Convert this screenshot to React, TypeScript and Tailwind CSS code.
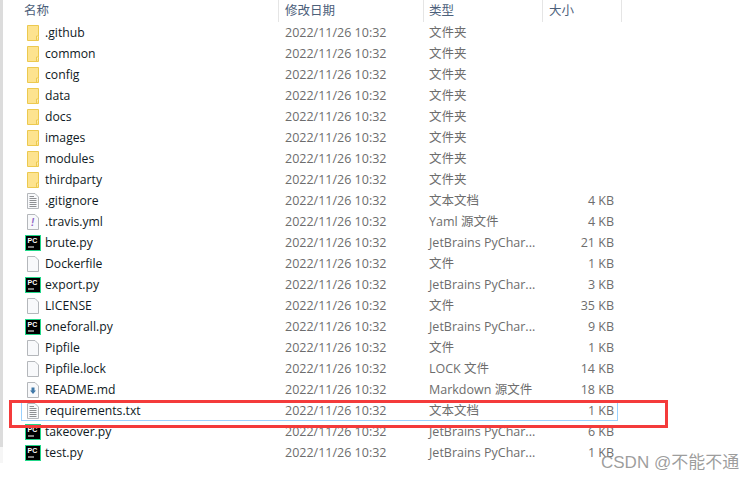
type Kind = "folder" | "doc" | "yaml" | "pc" | "blank" | "md"

interface Row {
  name: string
  kind: Kind
  type: string
  size?: string
  selected?: boolean
}

const rows: Row[] = [
  { name: ".github", kind: "folder", type: "文件夹" },
  { name: "common", kind: "folder", type: "文件夹" },
  { name: "config", kind: "folder", type: "文件夹" },
  { name: "data", kind: "folder", type: "文件夹" },
  { name: "docs", kind: "folder", type: "文件夹" },
  { name: "images", kind: "folder", type: "文件夹" },
  { name: "modules", kind: "folder", type: "文件夹" },
  { name: "thirdparty", kind: "folder", type: "文件夹" },
  { name: ".gitignore", kind: "doc", type: "文本文档", size: "4 KB" },
  { name: ".travis.yml", kind: "yaml", type: "Yaml 源文件", size: "4 KB" },
  { name: "brute.py", kind: "pc", type: "JetBrains PyChar...", size: "21 KB" },
  { name: "Dockerfile", kind: "blank", type: "文件", size: "1 KB" },
  { name: "export.py", kind: "pc", type: "JetBrains PyChar...", size: "3 KB" },
  { name: "LICENSE", kind: "blank", type: "文件", size: "35 KB" },
  { name: "oneforall.py", kind: "pc", type: "JetBrains PyChar...", size: "9 KB" },
  { name: "Pipfile", kind: "blank", type: "文件", size: "1 KB" },
  { name: "Pipfile.lock", kind: "blank", type: "LOCK 文件", size: "14 KB" },
  { name: "README.md", kind: "md", type: "Markdown 源文件", size: "18 KB" },
  { name: "requirements.txt", kind: "doc", type: "文本文档", size: "1 KB", selected: true },
  { name: "takeover.py", kind: "pc", type: "JetBrains PyChar...", size: "6 KB" },
  { name: "test.py", kind: "pc", type: "JetBrains PyChar...", size: "1 KB" },
]

function FileIcon({ kind }: { kind: Kind }) {
  if (kind === "pc") {
    return (
      <svg width="16" height="16" viewBox="0 0 16 16">
        <rect x="0.5" y="0.5" width="15" height="15" fill="#000" stroke="#21d789" />
        <text x="2.5" y="8" fontSize="7" fontWeight="700" fill="#fff" fontFamily="Liberation Sans, sans-serif">PC</text>
        <rect x="3" y="11.5" width="6" height="1" fill="#fff" />
      </svg>
    )
  }
  if (kind === "folder") {
    return (
      <svg width="16" height="16" viewBox="0 0 16 16">
        <path d="M2.5 .5H13.5V15.5H2.5Z" fill="#fde38f" stroke="#ecc94f" />
        <path d="M11.5 15V11H13.5" fill="#fff3c4" stroke="#ecc94f" />
      </svg>
    )
  }
  return (
    <svg width="16" height="16" viewBox="0 0 16 16">
      <path d="M2.5 .5H10L13.5 4V15.5H2.5Z" fill="#f8f9fb" stroke="#b4b7bb" />
      {kind === "doc" && (
        <path d="M4.5 3.5H9M4.5 5.5H11.5M4.5 7.5H11.5M4.5 9.5H11.5M4.5 11.5H11.5M4.5 13.5H11.5" stroke="#8d8f92" fill="none" />
      )}
      {kind === "yaml" && (
        <text x="6" y="11.5" fontSize="10" fontWeight="700" fontStyle="italic" fill="#8e63c4" fontFamily="Liberation Sans, sans-serif">!</text>
      )}
      {kind === "md" && <path d="M6.5 5.5H9.5V8.5H11L8 12L5 8.5H6.5Z" fill="#3f78a8" />}
    </svg>
  )
}

export default function App() {
  return (
    <div className="relative w-[752px] h-[480px] overflow-hidden bg-white text-[12.5px] text-[#0f1a24] font-['Open_Sans','Noto_Sans_CJK_SC',sans-serif]">
      <div className="flex h-full">
        <div className="w-[3px] h-[463px] shrink-0 bg-[#f6f6f6]">
          <div className="h-[447px] bg-[#dcdcdc]" />
        </div>
        <div className="flex-1 min-w-0">
          {/* header */}
          <div className="flex h-[22px] text-[#4c607a] items-center">
            <div className="w-[275px] pl-[21px]">名称</div>
            <div className="w-[145px] h-full flex items-center pl-[6px] border-l border-[#e5e5e5]">修改日期</div>
            <div className="w-[119px] h-full flex items-center pl-[5px] border-l border-[#e5e5e5]">类型</div>
            <div className="w-[80px] h-full flex items-center pl-[6px] border-x border-[#e5e5e5]">大小</div>
          </div>
          {/* rows */}
          {rows.map((row) => (
            <div key={row.name} className={`flex h-[21px] items-center ml-[18px] w-[597px] border ${row.selected ? "border-[#99d1ff]" : "border-transparent"}`}>
              <div className="w-[3px] shrink-0" />
              <div className="w-[253px] shrink-0 flex items-center gap-[4px] whitespace-nowrap">
                <FileIcon kind={row.kind} />
                <span className="text-[12.2px] pt-[2px]">{row.name}</span>
              </div>
              <div className="w-[144px] pl-[7px] pt-[2px] shrink-0 text-[#6d6d6d]">2022/11/26 10:32</div>
              <div className="w-[122px] pl-[7px] pt-[2px] shrink-0 text-[#6d6d6d] whitespace-nowrap">{row.type}</div>
              <div className="w-[70px] pt-[2px] shrink-0 text-right text-[#6d6d6d]">{row.size}</div>
            </div>
          ))}
        </div>
      </div>
      {/* annotation */}
      <div className="absolute left-[9px] top-[400px] w-[659px] h-[28px] border-[3px] border-[#f43b3b]" />
      {/* watermark */}
      <div className="absolute left-[601px] top-[450px] text-[17px] text-[#8c8c8c]/85 whitespace-nowrap font-['Liberation_Sans','Noto_Sans_CJK_SC',sans-serif]">CSDN @不能不通</div>
    </div>
  )
}
